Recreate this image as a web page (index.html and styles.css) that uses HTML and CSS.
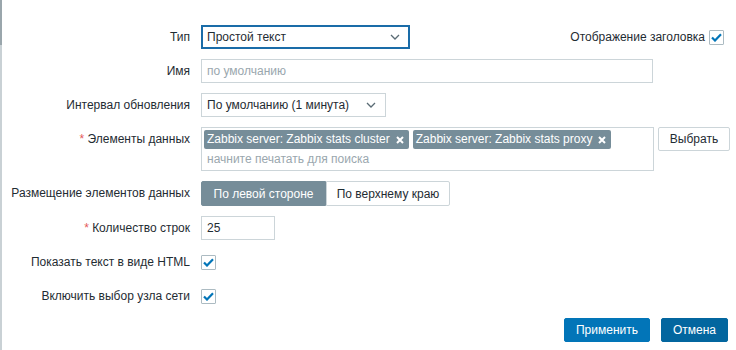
FILE: index.html
```html
<!DOCTYPE html>
<html lang="ru">
<head>
<meta charset="utf-8">
<link rel="stylesheet" href="styles.css">
</head>
<body>
<div class="edge"></div>
<div class="dialog">
  <form class="form">
    <label class="lbl">Тип</label>
    <div class="field row-split">
      <div class="select sel-type focused"><span>Простой текст</span><svg class="chev" width="10" height="6" viewBox="0 0 10 6"><path d="M1 1l4 4 4-4" fill="none" stroke="#5a6b74" stroke-width="1.3"/></svg></div>
      <div class="show-header"><span>Отображение заголовка</span><span class="cb"><svg width="11" height="9" viewBox="0 0 11 9"><path d="M1 4.5l3 3L10 1.2" fill="none" stroke="#0275b8" stroke-width="2.2"/></svg></span></div>
    </div>

    <label class="lbl">Имя</label>
    <div class="field"><div class="input inp-name placeholder">по умолчанию</div></div>

    <label class="lbl">Интервал обновления</label>
    <div class="field"><div class="select sel-interval"><span>По умолчанию (1 минута)</span><svg class="chev" width="10" height="6" viewBox="0 0 10 6"><path d="M1 1l4 4 4-4" fill="none" stroke="#5a6b74" stroke-width="1.3"/></svg></div></div>

    <label class="lbl"><span class="req">*</span> Элементы данных</label>
    <div class="field ms-row">
      <div class="multiselect">
        <div class="tags">
          <span class="tag">Zabbix server: Zabbix stats cluster<svg class="x" width="8" height="8" viewBox="0 0 8 8"><path d="M1 1l6 6M7 1L1 7" stroke="#fff" stroke-width="2"/></svg></span>
          <span class="tag">Zabbix server: Zabbix stats proxy<svg class="x" width="8" height="8" viewBox="0 0 8 8"><path d="M1 1l6 6M7 1L1 7" stroke="#fff" stroke-width="2"/></svg></span>
        </div>
        <div class="ms-ph">начните печатать для поиска</div>
      </div>
      <button type="button" class="btn-alt">Выбрать</button>
    </div>

    <label class="lbl">Размещение элементов данных</label>
    <div class="field">
      <div class="radio">
        <span class="seg seg-on">По левой стороне</span><span class="seg">По верхнему краю</span>
      </div>
    </div>

    <label class="lbl"><span class="req">*</span> Количество строк</label>
    <div class="field"><div class="input inp-rows">25</div></div>

    <label class="lbl">Показать текст в виде HTML</label>
    <div class="field"><span class="cb"><svg width="11" height="9" viewBox="0 0 11 9"><path d="M1 4.5l3 3L10 1.2" fill="none" stroke="#0275b8" stroke-width="2.2"/></svg></span></div>

    <label class="lbl">Включить выбор узла сети</label>
    <div class="field"><span class="cb"><svg width="11" height="9" viewBox="0 0 11 9"><path d="M1 4.5l3 3L10 1.2" fill="none" stroke="#0275b8" stroke-width="2.2"/></svg></span></div>
  </form>
  <div class="footer">
    <button type="button" class="btn">Применить</button>
    <button type="button" class="btn btn-dark">Отмена</button>
  </div>
</div>
</body>
</html>
```

FILE: styles.css
```css
* { box-sizing: border-box; }
html, body { margin: 0; padding: 0; background: #fff; }
body {
  width: 736px;
  height: 350px;
  overflow: hidden;
  font-family: "Liberation Sans", Arial, sans-serif;
  font-size: 12px;
  color: #1f2c33;
  position: relative;
}
.edge {
  position: absolute;
  left: 0; top: 0; bottom: 0;
  width: 2px;
  background: linear-gradient(#9aa6ac 0, #9aa6ac 45px, #c9d1d5 45px);
}
.dialog { padding: 25px 8px 0 10px; }
.form {
  display: grid;
  grid-template-columns: 180px 1fr;
  column-gap: 11px;
  row-gap: 10px;
  grid-auto-rows: minmax(24px, auto);
}
.lbl {
  text-align: right;
  line-height: 24px;
  white-space: nowrap;
  color: #1f2c33;
}
.req { color: #e45959; }
.field { display: flex; align-items: center; min-height: 24px; }
.row-split { justify-content: space-between; }
.select, .input {
  height: 24px;
  border: 1px solid #ccd5d9;
  background: #fff;
  padding: 0 5px;
  display: flex;
  align-items: center;
  justify-content: space-between;
  line-height: 22px;
}
.focused { border-color: #1a6ca8; border-width: 2px; padding: 0 4px; }
.chev { margin-right: 4px; }
.sel-type { width: 209px; }
.sel-interval { width: 185px; }
.inp-name { width: 452px; }
.inp-rows { width: 74px; }
.placeholder { color: #9aa7ae; }
.show-header { display: flex; align-items: center; gap: 4px; margin-right: 6px; }
.cb {
  width: 15px; height: 15px;
  border: 1px solid #acbbc2;
  background: #fff;
  display: inline-flex;
  align-items: center;
  justify-content: center;
  border-radius: 1px;
}
.ms-row { align-items: flex-start; gap: 4px; }
.multiselect {
  width: 453px;
  height: 44px;
  border: 1px solid #ccd5d9;
  padding: 2px 2px;
}
.tags { display: flex; gap: 4px; }
.tag {
  background: #768d99;
  color: #fff;
  height: 19px;
  line-height: 19px;
  padding: 0 4px 0 3px;
  border-radius: 2px;
  white-space: nowrap;
  display: inline-flex;
  align-items: center;
}
.tag .x { margin-left: 6px; margin-right: 1px; }
.ms-ph { color: #9aa7ae; padding: 0 3px; line-height: 20px; }
.btn-alt {
  font: inherit;
  height: 24px;
  width: 72px;
  background: #fff;
  border: 1px solid #ccd5d9;
  border-radius: 2px;
  color: #1f2c33;
  padding: 0;
}
.radio { display: flex; height: 25px; }
.seg {
  display: inline-flex; align-items: center; justify-content: center;
  border: 1px solid #ccd5d9;
  padding: 0;
  width: 124px;
  white-space: nowrap;
  color: #1f2c33;
  background: #fff;
  border-radius: 0 2px 2px 0;
}
.seg-on {
  width: 125px;
  background: #768d99;
  border-color: #768d99;
  color: #fff;
  border-radius: 2px 0 0 2px;
}
.footer {
  display: flex;
  justify-content: flex-end;
  gap: 11px;
  margin-top: 10px;
}
.btn {
  font: inherit;
  height: 24px;
  width: 86px;
  border: 1px solid #0275b8;
  background: #0275b8;
  color: #fff;
  border-radius: 2px;
  padding: 0;
}
.btn-dark { width: 67px; background: #03669f; border-color: #03669f; }
```
